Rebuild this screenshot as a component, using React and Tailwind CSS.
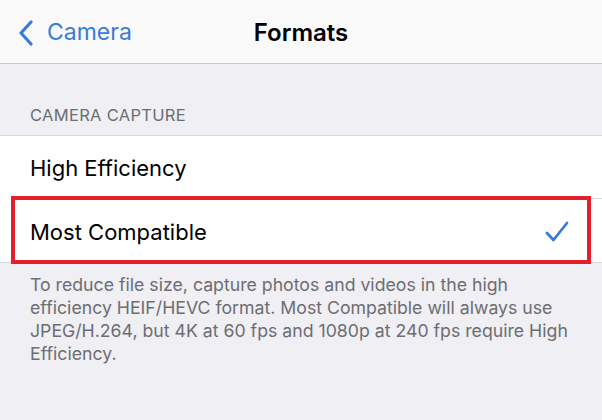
import React from 'react';

function Chevron() {
  return (
    <svg width="16" height="26" viewBox="0 0 16 26" fill="none" className="shrink-0">
      <path d="M13 2 L3 13 L13 24" stroke="#3a7bd5" strokeWidth="3.2" strokeLinecap="round" strokeLinejoin="round" />
    </svg>
  );
}

function Check() {
  return (
    <svg width="24" height="22" viewBox="0 0 24 22" fill="none">
      <path d="M2 12 L8.5 19 L22 2" stroke="#3a7bd5" strokeWidth="2.8" strokeLinecap="round" strokeLinejoin="round" />
    </svg>
  );
}

export default function App() {
  return (
    <div
      className="w-[602px] h-[420px] overflow-hidden bg-[#efeff4] flex flex-col"
      style={{ fontFamily: 'Inter, "Noto Sans", sans-serif' }}
    >
      <div className="h-[64px] shrink-0 bg-[#f9f9f9] border-b border-[#c8c8cc] relative flex items-center">
        <div className="flex items-center gap-[13px] pl-[18px] pt-[2px] text-[#3a7bd5] text-[23px]">
          <Chevron />
          <span>Camera</span>
        </div>
        <div className="absolute inset-0 pt-[2px] flex items-center justify-center text-[24px] font-semibold text-black pointer-events-none">
          Formats
        </div>
      </div>

      <div className="h-[71px] shrink-0 flex items-end pl-[30px] pb-[7px] text-[16.5px] text-[#6d6d72] tracking-[0.3px]">
        CAMERA CAPTURE
      </div>

      <div className="bg-white border-t border-b border-[#d8d8dc]">
        <div className="h-[63px] flex items-center pl-[30px] pt-[2px] text-[22px] text-black relative">
          High Efficiency
          <div className="absolute left-[30px] right-0 bottom-0 h-px bg-[#d8d8dc]" />
        </div>
        <div className="h-[63px] flex items-center justify-between pl-[30px] pr-[33px] pt-[3px] text-[22px] text-black relative">
          <span>Most Compatible</span>
          <Check />
          <div className="absolute left-[11px] right-[11px] top-[-3px] bottom-[-2px] border-[4px] border-[#e3202c]" />
        </div>
      </div>

      <div className="pl-[30px] pr-[32px] pt-[10px] text-[17.7px] leading-[23px] text-[#6d6d72]">
        To reduce file size, capture photos and videos in the high efficiency HEIF/HEVC format. Most Compatible will always use JPEG/H.264, but 4K at 60 fps and 1080p at 240 fps require High Efficiency.
      </div>
    </div>
  );
}
